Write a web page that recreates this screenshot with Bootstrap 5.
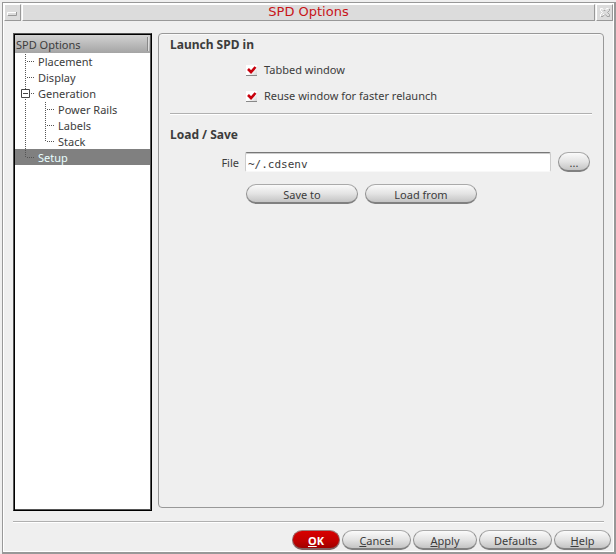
<!DOCTYPE html>
<html lang="en">
<head>
<meta charset="utf-8">
<meta name="viewport" content="width=device-width, initial-scale=1">
<title>SPD Options</title>
<link href="https://cdn.jsdelivr.net/npm/bootstrap@5.3.0/dist/css/bootstrap.min.css" rel="stylesheet">
<style>
  body { font: 11px/16px "Noto Sans", "Open Sans", sans-serif; color: #3c3c3c; background: #efefef; }
  .win { min-height: 100vh; padding: 2px 0 0 2px; }
  .frame { border: solid #989898; border-width: 1px 2px 2px 1px; box-shadow: inset 1px 1px #fff, inset -1px -1px #fff; padding: 1px; }
  .titlebar { height: 17px; gap: 1px; }
  .cell { background: #dcdcdc; border: 1px solid; border-color: #fff #989898 #989898 #fff; }
  .winbtn { width: 17px; padding: 0; }
  .caption { font: 13px/14px "DejaVu Sans", sans-serif; color: #c81419; margin: 0; }
  .main { padding: 12px 9px 0; gap: 6px; }
  .tree { width: 139px; flex: none; background: #fff; border: 1px solid #555; border-right-color: #000; border-bottom-color: #000; box-shadow: inset 1px 1px #000, inset -1px -1px #555; padding: 1px; }
  .treehead { height: 18px; line-height: 20px; padding: 0 1px; background: linear-gradient(#d2d2d2, #a4a4a4); }
  .treehead::after { content: ""; width: 2px; margin: 2px 0; background: #888; border-right: 1px solid #ddd; }
  .node { display: flex; height: 16px; line-height: 18px; color: inherit; text-decoration: none; }
  .node svg { flex: none; }
  .node.active { background: #808080; color: #e8ffff; }
  .panel { border: 1px solid #989898; border-radius: 4px; box-shadow: inset 0 1px #fafafa; padding: 3px 11px; margin-bottom: 3px; min-width: 0; }
  .heading { font-size: 12px; line-height: 16px; font-weight: 700; margin: 0; }
  .rule { height: 2px; border-top: 1px solid #b0b0b0; background: #fff; }
  .indent { padding-left: 76px; }
  .option { margin-top: 9px; gap: 7px; }
  .option + .option { margin-top: 10px; }
  .panel .rule.option { margin-top: 9px; }
  .section-gap { margin-top: 12px; }
  .tick { appearance: none; width: 11px; height: 11px; margin: 0; background: linear-gradient(135deg, #fff 50%, #d4d4d4); border-bottom: 1px solid #888; }
  .tick:checked { background: url("data:image/svg+xml,%3Csvg xmlns='http://www.w3.org/2000/svg' viewBox='0 0 11 10'%3E%3Cpath d='M2 4L5 7 9.500 2' fill='none' stroke='%23c8000c' stroke-width='2.600'/%3E%3C/svg%3E") no-repeat, linear-gradient(135deg, #fff 50%, #d4d4d4); }
  .filerow { margin-top: 9px; padding-right: 2px; }
  .filelabel { width: 69px; margin-right: 6px; padding-top: 2px; text-align: right; }
  .path { min-width: 0; height: 20px; margin-right: 7px; border: 1px solid #ccc; border-top: 1px solid #777; border-bottom-color: #f8f8f8; border-radius: 2px; box-shadow: inset 0 1px #ccc; background: #fff; color: #3c3c3c; padding: 4px 2px 0; font: 11px/14px "DejaVu Sans Mono", monospace; }
  .pill { height: 20px; padding: 2px 0 0; border: 1px solid #909090; border-top-color: #aaa; border-bottom: 2px solid #808080; border-radius: 10px; background: linear-gradient(#fafafa, #e4e4e4 50%, #c4c4c4); color: #3c3c3c; font-size: 11px; line-height: 15px; }
  .pairs { gap: 7px; }
  .w-dots { width: 32px; }
  .w-wide { width: 112px; }
  .w-ok { width: 48px; }
  .w-cancel { width: 69px; }
  .w-apply { width: 64px; }
  .w-defaults { width: 73px; }
  .w-help { width: 57px; }
  .pill.primary { background: linear-gradient(#d80000, #c00000 60%, #a00000); color: #fff; font-weight: 700; border-color: #a08080 #906060 #806060; }
  .divider { margin: 10px 9px 0; }
  .actions { padding: 7px 2px 1px; gap: 2px; }
</style>
</head>
<body>
<div class="win d-flex">
  <div class="frame flex-grow-1 d-flex flex-column">
    <header class="titlebar d-flex">
      <button class="cell winbtn" type="button" aria-label="Window menu"><svg class="d-block" width="15" height="15" viewBox="0 0 15 15"><path d="M2.500 10V7.500H12" fill="none" stroke="#fff"/><path d="M3 10.500H11.500V7" fill="none" stroke="#989898"/></svg></button>
      <div class="cell flex-grow-1"><h1 class="caption text-center">SPD Options</h1></div>
      <button class="cell winbtn" type="button" aria-label="Close"><svg class="d-block" width="15" height="15" viewBox="0 0 15 15"><path d="M6.500 5.500L5.500 3.500H3.500V5.500L5.500 7.500 3.500 9.500V11.500M8.500 5.500L9.500 3.500H11.500M6 9.500H8" fill="none" stroke="#fff"/><path d="M12.500 4V5.500L10.500 7.500 12.500 9.500V11.500H10L8.500 9.500M4 11.500H6L7.500 9.500M6.500 5.500H8.500" fill="none" stroke="#a4a4a4"/></svg></button>
    </header>
    <main class="main d-flex flex-grow-1">
      <nav class="tree" aria-label="Option pages">
        <div class="treehead d-flex justify-content-between">SPD Options</div>
        <a class="node" href="#"><svg width="23" height="16"><path d="M10.500 1V16M12 8.500H20" stroke="#555" stroke-dasharray="1 1"/></svg>Placement</a>
        <a class="node" href="#"><svg width="23" height="16"><path d="M10.500 1V16M12 8.500H20" stroke="#555" stroke-dasharray="1 1"/></svg>Display</a>
        <a class="node" href="#"><svg width="23" height="16"><path d="M10.500 1V4M10.500 14V16M16 8.500H20" stroke="#555" stroke-dasharray="1 1"/><path d="M6.500 4.500h8v8h-8zM8 8.500h5" fill="none" stroke="#444"/></svg>Generation</a>
        <a class="node" href="#"><svg width="43" height="16"><path d="M10.500 1V16M30.500 1V16M32 8.500H40" stroke="#555" stroke-dasharray="1 1"/></svg>Power Rails</a>
        <a class="node" href="#"><svg width="43" height="16"><path d="M10.500 1V16M30.500 1V16M32 8.500H40" stroke="#555" stroke-dasharray="1 1"/></svg>Labels</a>
        <a class="node" href="#"><svg width="43" height="16"><path d="M10.500 1V16M30.500 1V9M32 8.500H40" stroke="#555" stroke-dasharray="1 1"/></svg>Stack</a>
        <a class="node active" href="#" aria-current="page"><svg width="23" height="16"><path d="M10.500 1V9M12 8.500H20" stroke="#555" stroke-dasharray="1 1"/></svg>Setup</a>
      </nav>
      <section class="panel flex-grow-1">
        <h2 class="heading">Launch SPD in</h2>
        <div class="option indent d-flex align-items-center"><input class="tick" type="checkbox" id="tabbed" checked><label for="tabbed">Tabbed window</label></div>
        <div class="option indent d-flex align-items-center"><input class="tick" type="checkbox" id="reuse" checked><label for="reuse">Reuse window for faster relaunch</label></div>
        <div class="rule option"></div>
        <h2 class="heading section-gap">Load / Save</h2>
        <div class="filerow d-flex align-items-center"><label class="filelabel" for="file">File</label><input class="path flex-grow-1" id="file" type="text" value="~/.cdsenv"><button class="pill w-dots" type="button">...</button></div>
        <div class="indent pairs section-gap d-flex"><button class="pill w-wide" type="button">Save to</button><button class="pill w-wide" type="button">Load from</button></div>
      </section>
    </main>
    <footer>
      <div class="rule divider"></div>
      <div class="actions d-flex justify-content-end">
        <button class="pill primary w-ok" type="button"><u>O</u>K</button>
        <button class="pill w-cancel" type="button"><u>C</u>ancel</button>
        <button class="pill w-apply" type="button"><u>A</u>pply</button>
        <button class="pill w-defaults" type="button">Defaults</button>
        <button class="pill w-help" type="button"><u>H</u>elp</button>
      </div>
    </footer>
  </div>
</div>
<script src="https://cdn.jsdelivr.net/npm/bootstrap@5.3.0/dist/js/bootstrap.bundle.min.js"></script>
</body>
</html>
